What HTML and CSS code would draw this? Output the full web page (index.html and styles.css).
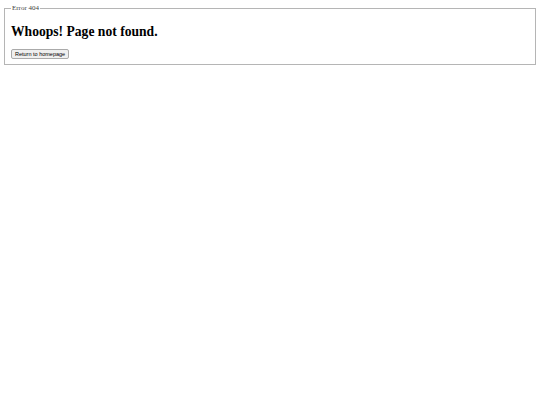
FILE: index.html
```html
<!DOCTYPE html>
<html>
<head>
<meta charset="utf-8">
<link rel="stylesheet" href="styles.css">
</head>
<body>
<fieldset class="box">
<legend class="box-legend">Error 404</legend>
<h2 class="title">Whoops! Page not found.</h2>
<button class="home-btn">Return to homepage</button>
</fieldset>
</body>
</html>
```
FILE: styles.css
```css
body {
  margin: 4px;
  font-family: "Liberation Serif", serif;
  background: #fff;
}
.box {
  margin: 0;
  padding: 2px 6px 4px;
  border: 1px solid #b5b5b5;
  box-shadow: inset 1px 1px 0 #fff;
}
.box-legend {
  font-size: 7px;
  padding: 0 1px;
  color: #444;
}
.title {
  font-size: 13.6px;
  font-weight: bold;
  margin: 10px 0 2px;
}
.home-btn {
  font-family: "Liberation Sans", sans-serif;
  font-size: 5.5px;
  padding: 1px 3px;
  border: 1px solid #aaa;
  border-radius: 2px;
  background: #efefef;
  color: #000;
}
```
